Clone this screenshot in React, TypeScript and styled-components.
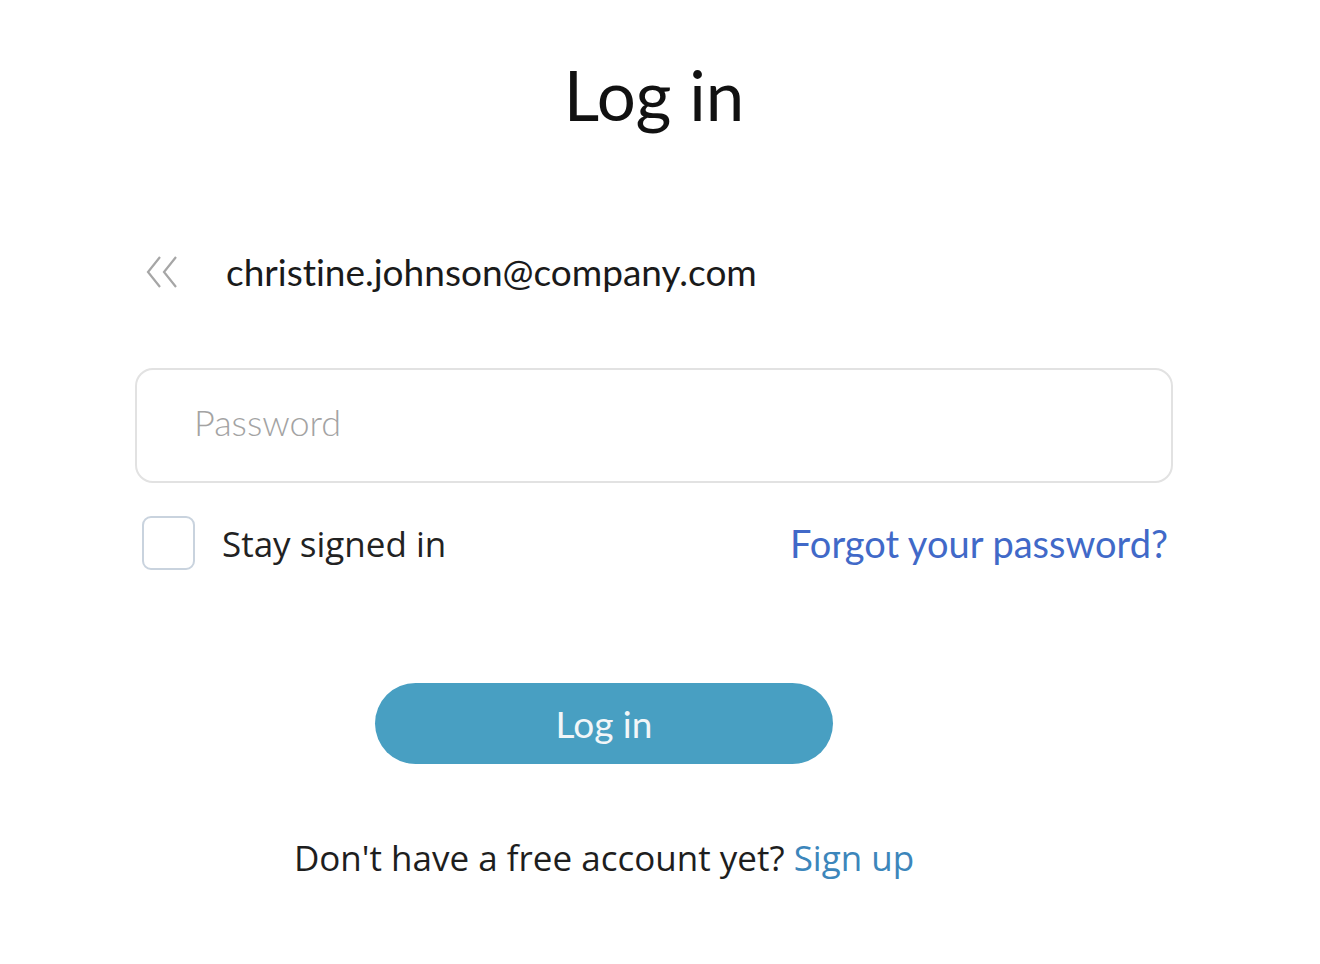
import styled, { createGlobalStyle } from "styled-components";

const GlobalStyle = createGlobalStyle`
  * { box-sizing: border-box; }
  html, body {
    margin: 0;
    padding: 0;
    background: #ffffff;
    font-variant-ligatures: none;
  }
`;

const App = () => {
  return (
    <>
      <GlobalStyle />
      <Page>
        <Title>Log in</Title>

        <EmailRow>
          <BackBtn aria-label="Back">
            <svg width="36" height="34" viewBox="0 0 36 34" fill="none">
              <path d="M14 2 L2 17 L14 32" stroke="#a6a6a6" strokeWidth="2.2" />
              <path d="M30 2 L18 17 L30 32" stroke="#a6a6a6" strokeWidth="2.2" />
            </svg>
          </BackBtn>
          <Email>christine.johnson@company.com</Email>
        </EmailRow>

        <PasswordInput type="password" placeholder="Password" />

        <OptionsRow>
          <CheckLabel>
            <CheckBox type="checkbox" />
            Stay signed in
          </CheckLabel>
          <ForgotLink href="#">Forgot your password?</ForgotLink>
        </OptionsRow>

        <Actions>
          <LoginBtn>Log in</LoginBtn>
          <SignUpText>
            Don't have a free account yet? <SignUpLink href="#">Sign up</SignUpLink>
          </SignUpText>
        </Actions>
      </Page>
    </>
  );
};

const Page = styled.div`
  width: 1038px;
  margin-left: 135px;
  padding-top: 50px;
  display: flex;
  flex-direction: column;
`;

const Title = styled.h1`
  margin: 0;
  text-align: center;
  font-family: Lato, "Noto Sans", sans-serif;
  font-weight: 400;
  font-size: 69px;
  line-height: 90px;
  color: #111111;
`;

const EmailRow = styled.div`
  display: flex;
  align-items: center;
  gap: 44px;
  margin-top: 106px;
  padding-left: 11px;
  height: 50px;
`;

const BackBtn = styled.button`
  display: flex;
  align-items: center;
  justify-content: center;
  padding: 0;
  margin-top: 2px;
  border: none;
  background: none;
  cursor: pointer;
`;

const Email = styled.span`
  font-family: Lato, "Noto Sans", sans-serif;
  font-size: 37px;
  font-weight: 400;
  color: #1a1a1a;
`;

const PasswordInput = styled.input`
  margin-top: 72px;
  width: 100%;
  height: 115px;
  border: 2px solid #e2e2e2;
  border-radius: 18px;
  padding: 0 57px 8px;
  font-family: Lato, "Noto Sans", sans-serif;
  font-size: 36px;
  color: #333;
  outline: none;
  &::placeholder {
    color: #a3a3a3;
    font-weight: 300;
  }
`;

const OptionsRow = styled.div`
  display: flex;
  align-items: center;
  justify-content: space-between;
  margin-top: 33px;
  padding-left: 7px;
  padding-right: 5px;
  height: 54px;
`;

const CheckLabel = styled.label`
  display: flex;
  align-items: center;
  gap: 27px;
  font-family: "Open Sans", "Noto Sans", sans-serif;
  font-size: 35px;
  color: #222;
  cursor: pointer;
`;

const CheckBox = styled.input`
  appearance: none;
  margin: 0;
  width: 53px;
  height: 54px;
  border: 2px solid #c9d3de;
  border-radius: 9px;
  background: #fff;
  cursor: pointer;
`;

const ForgotLink = styled.a`
  font-family: Lato, "Noto Sans", sans-serif;
  font-size: 38px;
  color: #4169c8;
  text-decoration: none;
`;

const Actions = styled.div`
  display: flex;
  flex-direction: column;
  align-items: center;
  margin-right: 100px;
  margin-top: 113px;
`;

const LoginBtn = styled.button`
  width: 458px;
  height: 81px;
  border: none;
  border-radius: 41px;
  background: #489fc2;
  color: #f2f6f8;
  font-family: Lato, "Noto Sans", sans-serif;
  font-size: 37px;
  cursor: pointer;
`;

const SignUpText = styled.p`
  margin: 70px 0 0 0;
  font-family: "Open Sans", "Noto Sans", sans-serif;
  font-size: 35px;
  color: #1e1e1e;
`;

const SignUpLink = styled.a`
  color: #3c86bb;
  text-decoration: none;
`;

export default App;
